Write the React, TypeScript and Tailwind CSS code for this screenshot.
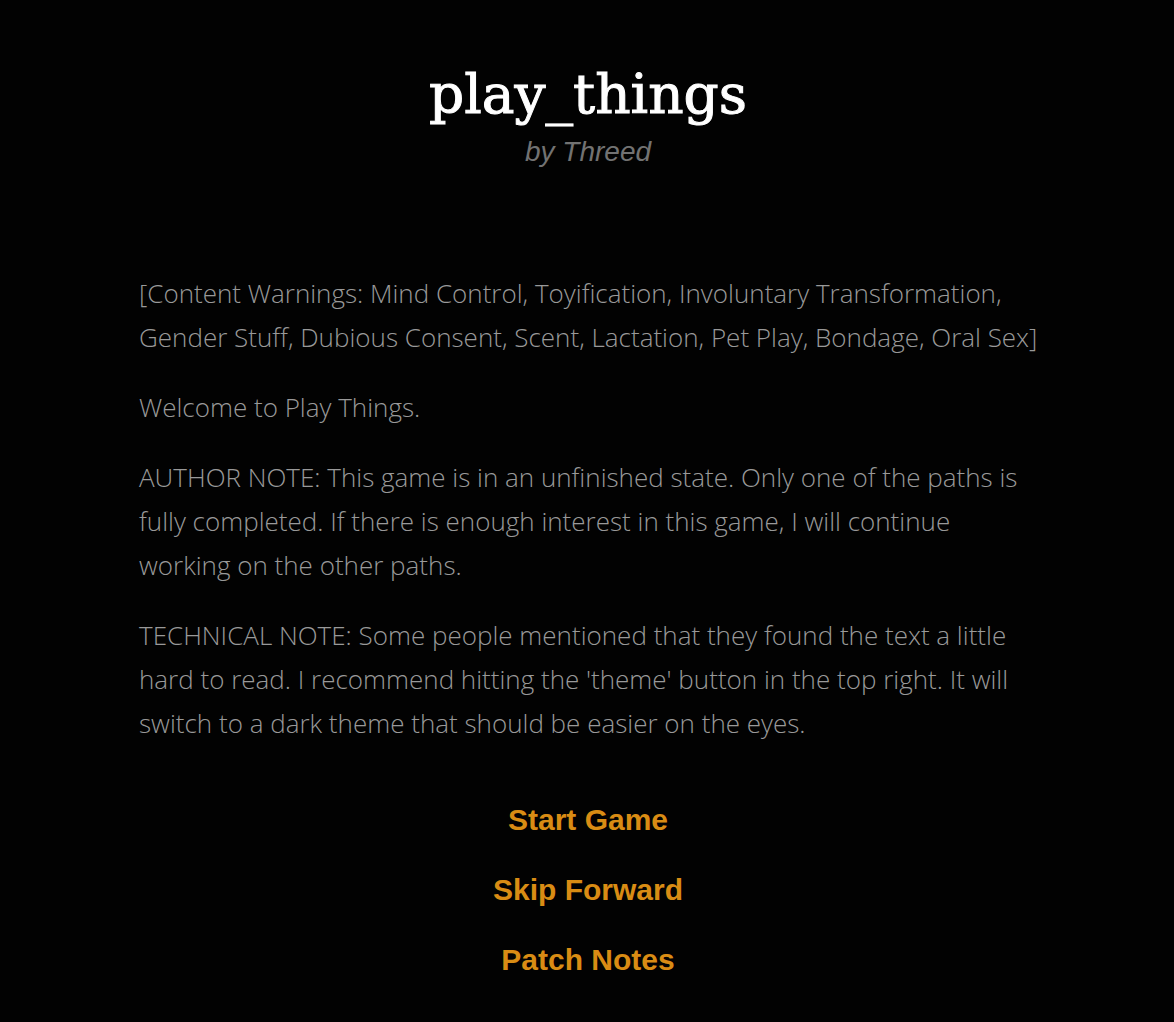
export default function App() {
  const body = "font-['Open_Sans',sans-serif] font-light text-[26px] leading-[44px] text-[#999]";
  return (
    <div className="min-h-screen bg-[#020202]">
      <div className="mx-auto w-[900px] pt-[58px] pl-[2px]">
        <h1 className="text-center font-['DejaVu_Serif',serif] text-[55px] leading-[72px] text-white [-webkit-text-stroke:1px_white]">
          play_things
        </h1>
        <p className="mt-[4px] text-center font-['Liberation_Sans',sans-serif] text-[28px] italic leading-[36px] text-[#727272]">
          by Threed
        </p>

        <div className="mt-[101px] -mr-[6px] flex flex-col gap-[26px]">
          <p className={body}>
            [Content Warnings: Mind Control, Toyification, Involuntary Transformation, Gender Stuff, Dubious Consent,
            Scent, Lactation, Pet Play, Bondage, Oral Sex]
          </p>
          <p className={body}>Welcome to Play Things.</p>
          <p className={body}>
            AUTHOR NOTE: This game is in an unfinished state. Only one of the paths is fully completed. If there is
            enough interest in this game, I will continue working on the other paths.
          </p>
          <p className={body}>
            TECHNICAL NOTE: Some people mentioned that they found the text a little hard to read. I recommend hitting
            the 'theme' button in the top right. It will switch to a dark theme that should be easier on the eyes.
          </p>
        </div>

        <div className="mt-[57px] flex flex-col items-center gap-[35px] font-['Liberation_Sans',sans-serif] text-[30px] font-bold leading-[35px] text-[#d98c14]">
          <a className="cursor-pointer">Start Game</a>
          <a className="cursor-pointer">Skip Forward</a>
          <a className="cursor-pointer">Patch Notes</a>
        </div>
      </div>
    </div>
  );
}
